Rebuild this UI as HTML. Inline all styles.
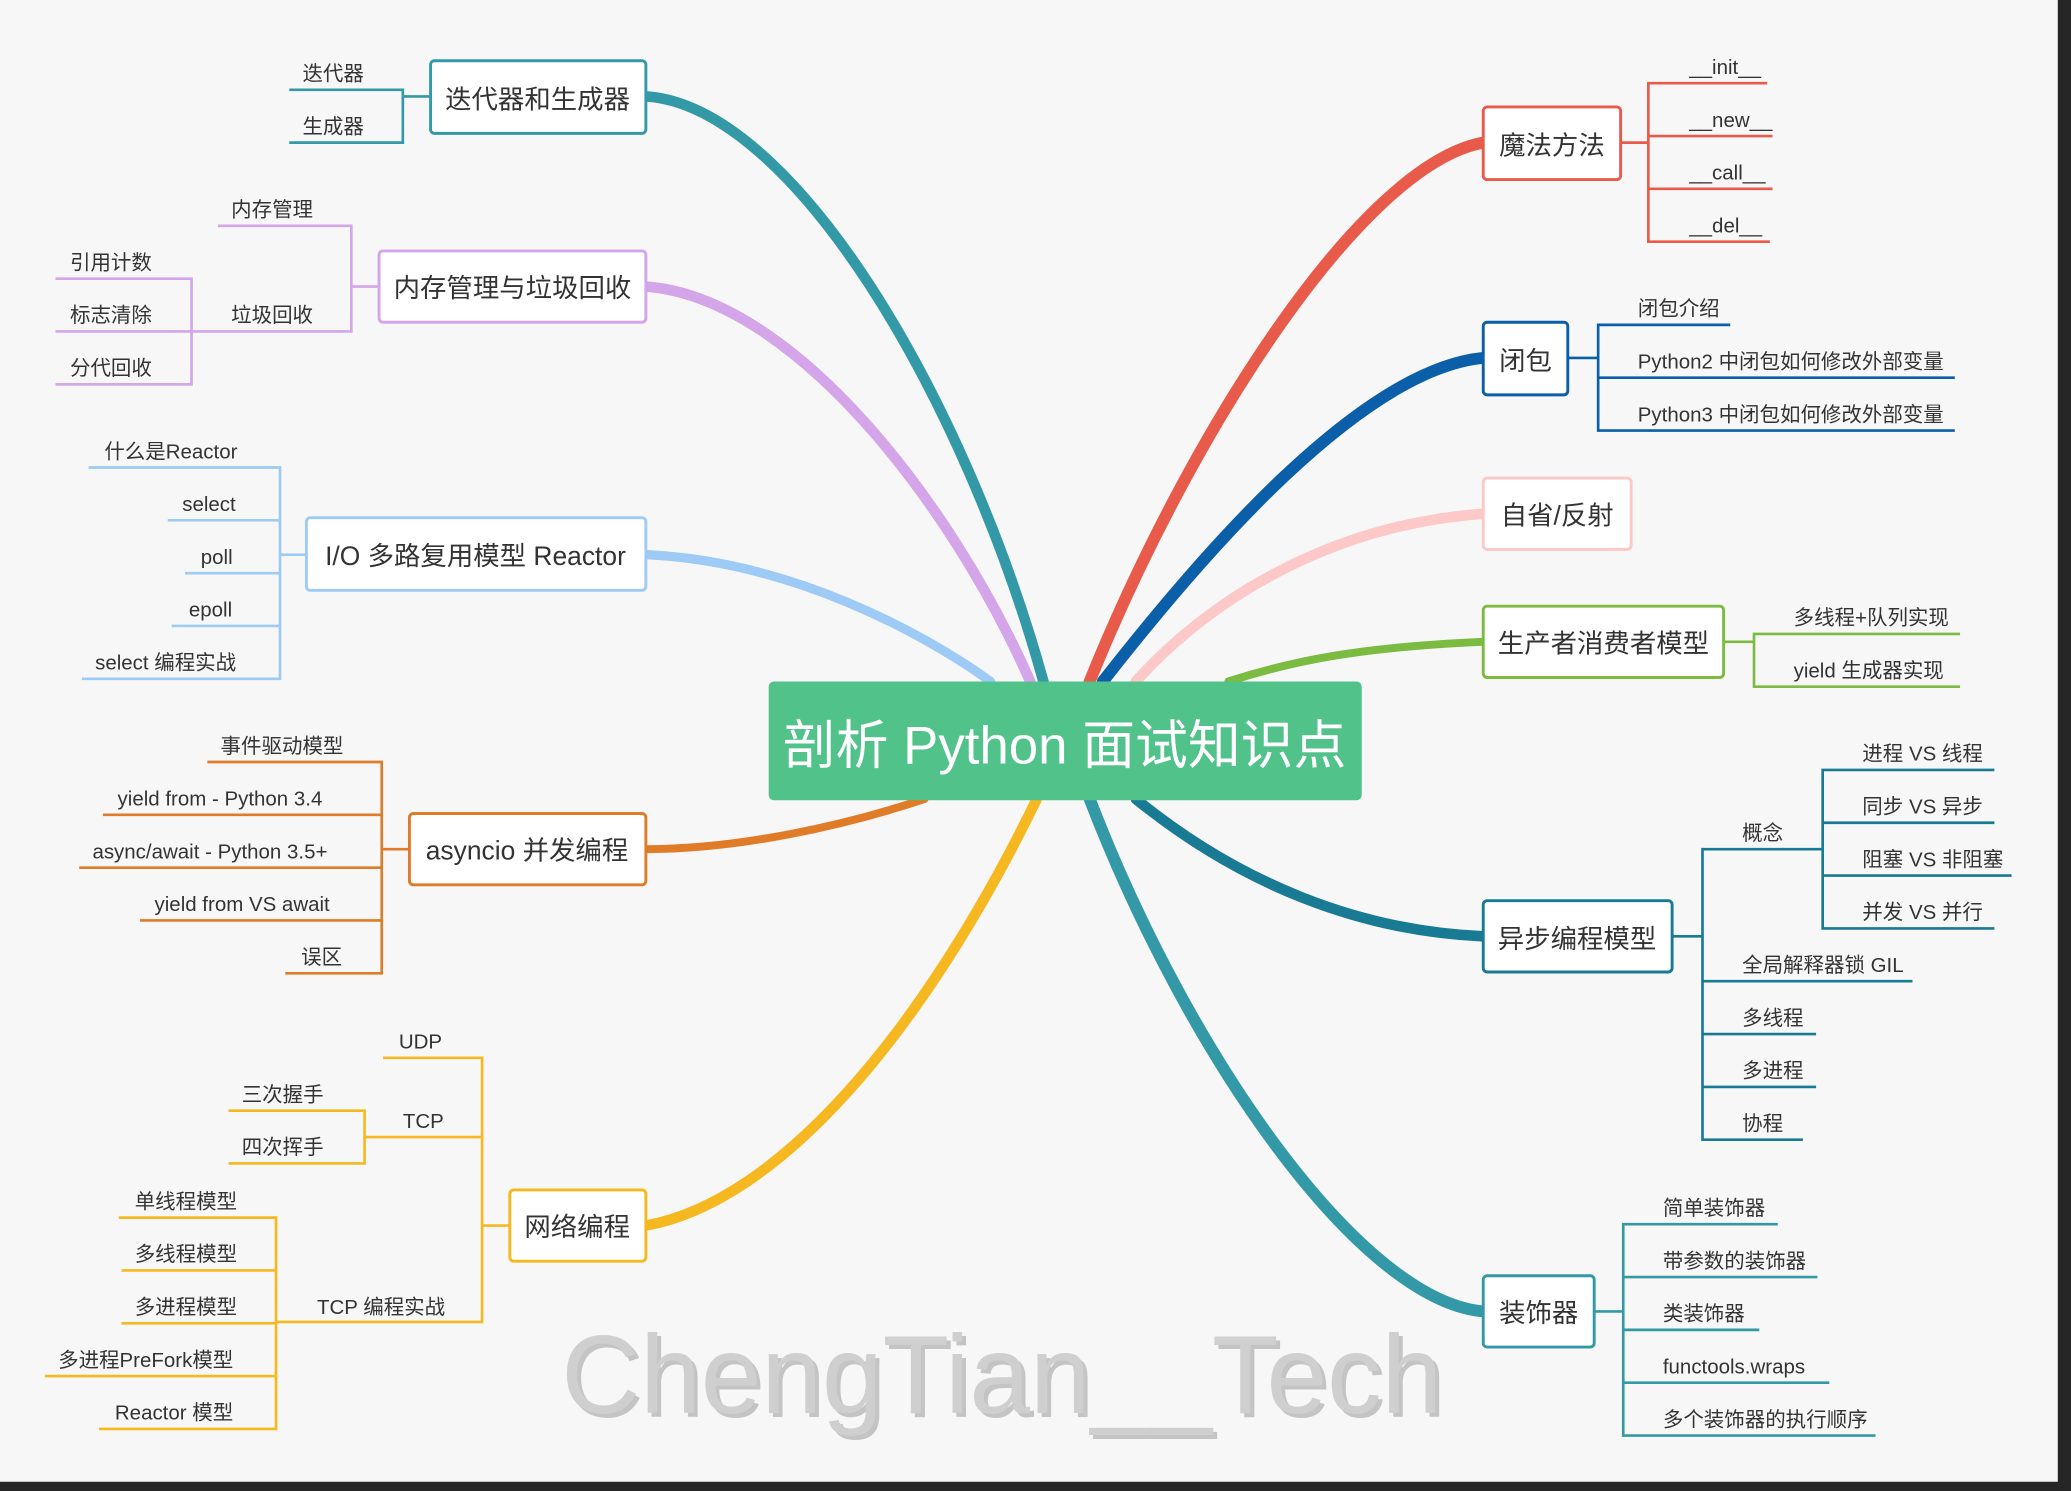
<!DOCTYPE html>
<html><head><meta charset="utf-8"><style>
html,body{margin:0;padding:0;background:#262626;}
svg{display:block;}
text{font-family:"Liberation Sans","Noto Sans CJK SC",sans-serif;fill:#333;}
.l{font-size:15.5px;}
.n{font-size:20px;}
.b{fill:#fff;stroke-width:2.2;}
.ln{fill:none;stroke-width:2;}
</style></head><body>
<svg width="2071" height="1491" viewBox="0 0 1568 1129" preserveAspectRatio="none" xmlns="http://www.w3.org/2000/svg">
<rect x="0" y="0" width="1558" height="1122" fill="#f7f7f7"/>
<g id="br" fill="none" stroke-linecap="round">
<path d="M489,73 C600,80 730,300 790,516" stroke="#3399a6" stroke-width="8"/>
<path d="M489,217 C600,225 720,380 780,516" stroke="#d4a5e8" stroke-width="8"/>
<path d="M489,420 C600,425 700,480 750,516" stroke="#9ecbf5" stroke-width="7"/>
<path d="M489,643 C560,643 640,625 700,605" stroke="#e07b28" stroke-width="6"/>
<path d="M489,928 C590,910 700,780 785,605" stroke="#f5b820" stroke-width="8"/>
<path d="M1123,108 C1030,125 900,330 825,516" stroke="#e85a4a" stroke-width="9"/>
<path d="M1123,271 C1030,280 910,420 835,516" stroke="#0b5ea8" stroke-width="9"/>
<path d="M1123,389 C1000,398 910,460 860,516" stroke="#fcc8c8" stroke-width="8"/>
<path d="M1123,486 C1030,490 980,500 930,516" stroke="#7cbb42" stroke-width="6"/>
<path d="M1123,709 C1030,705 940,670 860,605" stroke="#187a93" stroke-width="8"/>
<path d="M1123,993 C1030,985 900,800 825,605" stroke="#3399a6" stroke-width="9"/>
</g>
<!-- center -->
<rect x="582" y="516" width="449" height="90" rx="4" fill="#52c28b"/>
<text x="806" y="578" text-anchor="middle" style="font-size:40px;fill:#fff">剖析 Python 面试知识点</text>

<!-- 迭代器和生成器 -->
<g stroke="#3399a6" class="ln"><path d="M326,73 H305 M219,68 H305 V108 H219"/></g>
<rect class="b" stroke="#3399a6" x="326" y="46" width="163" height="55" rx="3"/>
<text class="n" x="407" y="82" text-anchor="middle">迭代器和生成器</text>
<text class="l" x="229" y="61">迭代器</text><text class="l" x="229" y="101">生成器</text>

<!-- 内存管理 -->
<g stroke="#d4a5e8" class="ln"><path d="M287,217 H266 M165,171 H266 V251 H165 M42,211 H145 V291 H42 M42,251 H165"/></g>
<rect class="b" stroke="#d4a5e8" x="287" y="190" width="202" height="54" rx="3"/>
<text class="n" x="388" y="225" text-anchor="middle">内存管理与垃圾回收</text>
<text class="l" x="175" y="164">内存管理</text><text class="l" x="175" y="244">垃圾回收</text>
<text class="l" x="53" y="204">引用计数</text><text class="l" x="53" y="244">标志清除</text><text class="l" x="53" y="284">分代回收</text>

<!-- IO -->
<g stroke="#9ecbf5" class="ln"><path d="M232,420 H212 M67,354 H212 V514 H62 M127,394 H212 M140,434 H212 M130,474 H212"/></g>
<rect class="b" stroke="#9ecbf5" x="232" y="392" width="257" height="55" rx="3"/>
<text class="n" x="360" y="428" text-anchor="middle">I/O 多路复用模型 Reactor</text>
<text class="l" x="79" y="347">什么是Reactor</text><text class="l" x="138" y="387">select</text><text class="l" x="152" y="427">poll</text><text class="l" x="143" y="467">epoll</text><text class="l" x="72" y="507">select 编程实战</text>

<!-- asyncio -->
<g stroke="#e07b28" class="ln"><path d="M310,643 H289 M157,577 H289 V737 H216 M78,617 H289 M60,657 H289 M106,697 H289"/></g>
<rect class="b" stroke="#e07b28" x="310" y="616" width="179" height="54" rx="3"/>
<text class="n" x="399" y="651" text-anchor="middle">asyncio 并发编程</text>
<text class="l" x="167" y="570">事件驱动模型</text><text class="l" x="89" y="610">yield from - Python 3.4</text><text class="l" x="70" y="650">async/await - Python 3.5+</text><text class="l" x="117" y="690">yield from VS await</text><text class="l" x="228" y="730">误区</text>

<!-- 网络编程 -->
<g stroke="#f5b820" class="ln"><path d="M386,928 H365 M290,801 H365 V1001 H210 M276,861 H365 M173,841 H276 V881 H173 M90,922 H209 V1082 H75 M92,962 H209 M92,1002 H209 M34,1042 H209"/></g>
<rect class="b" stroke="#f5b820" x="386" y="901" width="103" height="54" rx="3"/>
<text class="n" x="437" y="936" text-anchor="middle">网络编程</text>
<text class="l" x="302" y="794">UDP</text><text class="l" x="305" y="854">TCP</text><text class="l" x="240" y="995">TCP 编程实战</text>
<text class="l" x="183" y="834">三次握手</text><text class="l" x="183" y="874">四次挥手</text>
<text class="l" x="102" y="915">单线程模型</text><text class="l" x="102" y="955">多线程模型</text><text class="l" x="102" y="995">多进程模型</text><text class="l" x="44" y="1035">多进程PreFork模型</text><text class="l" x="87" y="1075">Reactor 模型</text>

<!-- 魔法方法 -->
<g stroke="#e85a4a" class="ln"><path d="M1227,108 H1248 M1338,63 H1248 V183 H1340 M1248,103 H1342 M1248,143 H1342"/></g>
<rect class="b" stroke="#e85a4a" x="1123" y="81" width="104" height="55" rx="3"/>
<text class="n" x="1175" y="117" text-anchor="middle">魔法方法</text>
<text class="l" x="1279" y="56">__init__</text><text class="l" x="1279" y="96">__new__</text><text class="l" x="1279" y="136">__call__</text><text class="l" x="1279" y="176">__del__</text>

<!-- 闭包 -->
<g stroke="#0b5ea8" class="ln"><path d="M1187,271 H1210 M1310,246 H1210 V326 H1480 M1210,286 H1480"/></g>
<rect class="b" stroke="#0b5ea8" x="1123" y="244" width="64" height="55" rx="3"/>
<text class="n" x="1155" y="280" text-anchor="middle">闭包</text>
<text class="l" x="1240" y="239">闭包介绍</text><text class="l" x="1240" y="279">Python2 中闭包如何修改外部变量</text><text class="l" x="1240" y="319">Python3 中闭包如何修改外部变量</text>

<!-- 自省 -->
<rect class="b" stroke="#fcc8c8" x="1123" y="362" width="112" height="54" rx="3"/>
<text class="n" x="1179" y="397" text-anchor="middle">自省/反射</text>

<!-- 生产者 -->
<g stroke="#7cbb42" class="ln"><path d="M1305,486 H1328 M1484,480 H1328 V520 H1484"/></g>
<rect class="b" stroke="#7cbb42" x="1123" y="459" width="182" height="54" rx="3"/>
<text class="n" x="1214" y="494" text-anchor="middle">生产者消费者模型</text>
<text class="l" x="1358" y="473">多线程+队列实现</text><text class="l" x="1358" y="513">yield 生成器实现</text>

<!-- 异步 -->
<g stroke="#187a93" class="ln"><path d="M1266,709 H1289 M1380,643 H1289 V863 H1365 M1289,743 H1448 M1289,783 H1375 M1289,823 H1375 M1510,583 H1380 V703 H1510 M1380,623 H1510 M1380,663 H1523"/></g>
<rect class="b" stroke="#187a93" x="1123" y="682" width="143" height="54" rx="3"/>
<text class="n" x="1194" y="718" text-anchor="middle">异步编程模型</text>
<text class="l" x="1319" y="636">概念</text><text class="l" x="1319" y="736">全局解释器锁 GIL</text><text class="l" x="1319" y="776">多线程</text><text class="l" x="1319" y="816">多进程</text><text class="l" x="1319" y="856">协程</text>
<text class="l" x="1410" y="576">进程 VS 线程</text><text class="l" x="1410" y="616">同步 VS 异步</text><text class="l" x="1410" y="656">阻塞 VS 非阻塞</text><text class="l" x="1410" y="696">并发 VS 并行</text>

<!-- 装饰器 -->
<g stroke="#3399a6" class="ln"><path d="M1207,993 H1229 M1346,927 H1229 V1087 H1420 M1229,967 H1376 M1229,1007 H1332 M1229,1047 H1385"/></g>
<rect class="b" stroke="#3399a6" x="1123" y="966" width="84" height="54" rx="3"/>
<text class="n" x="1165" y="1001" text-anchor="middle">装饰器</text>
<text class="l" x="1259" y="920">简单装饰器</text><text class="l" x="1259" y="960">带参数的装饰器</text><text class="l" x="1259" y="1000">类装饰器</text><text class="l" x="1259" y="1040">functools.wraps</text><text class="l" x="1259" y="1080">多个装饰器的执行顺序</text>

<!-- watermark -->
<text x="428" y="1073" textLength="667" lengthAdjust="spacingAndGlyphs" style="font-size:84px;fill:#b8b8b8;opacity:.8">ChengTian__Tech</text>
<text x="425" y="1070" textLength="667" lengthAdjust="spacingAndGlyphs" style="font-size:84px;fill:#cfcfcf">ChengTian__Tech</text>
</svg>
</body></html>
